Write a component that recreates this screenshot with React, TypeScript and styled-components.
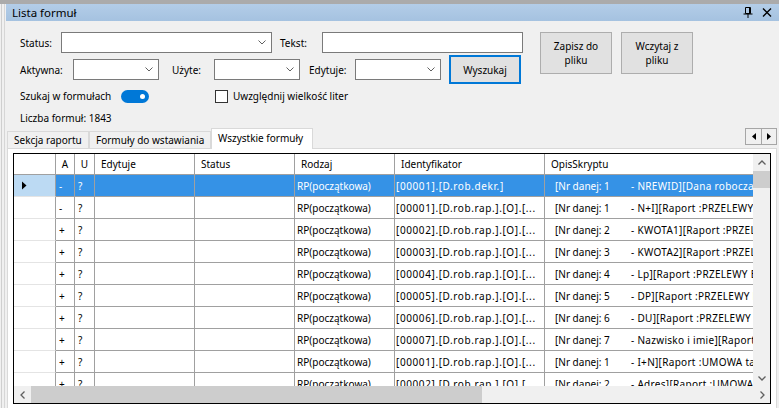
import React from "react"
import styled, { createGlobalStyle } from "styled-components"

const GlobalStyle = createGlobalStyle`
  * { box-sizing: border-box; }
  html, body { margin: 0; padding: 0; background: #f0f0f0; }
  body {
    font-family: "Noto Sans", "Liberation Sans", sans-serif;
    font-size: 10px;
    color: #000;
    overflow: hidden;
  }
`

const Window = styled.div`
  width: 779px;
  height: 408px;
  display: flex;
  overflow: hidden;
  border-top: 4px solid #ababab;
  background: #f0f0f0;
`

const SideStrip = styled.div`
  flex: none;
  width: 6px;
  background: linear-gradient(
    to right,
    #f0f0f0 0 1px,
    #cfcfcf 1px 2px,
    #f0f0f0 2px 4px,
    #d6d6d6 4px 5px,
    #f0f0f0 5px
  );
`

const Panel = styled.div`
  flex: 1;
  min-width: 0;
  display: flex;
  flex-direction: column;
`

const TitleBar = styled.div`
  flex: none;
  height: 17px;
  display: flex;
  align-items: center;
  padding: 0 7px 0 6px;
  background: linear-gradient(#b3cde8, #a5c2e0);
  font-size: 11.5px;
`

const TitleText = styled.span`
  flex: 1;
`

const TitleButtons = styled.div`
  display: flex;
  align-items: center;
  gap: 9px;
`

const Filters = styled.div`
  display: flex;
  align-items: flex-start;
  margin-top: 11px;
  padding-left: 14px;
`

const FilterRows = styled.div`
  display: flex;
  flex-direction: column;
  width: 503px;
`

const FilterRow = styled.div<{ $h: number; $mt?: number }>`
  display: flex;
  align-items: center;
  height: ${p => p.$h}px;
  margin-top: ${p => p.$mt ?? 0}px;
`

const FieldLabel = styled.span<{ $w?: number; $ml?: number }>`
  flex: none;
  width: ${p => (p.$w ? `${p.$w}px` : "auto")};
  margin-left: ${p => p.$ml ?? 0}px;
  white-space: nowrap;
`

const Combo = styled.div<{ $w: number }>`
  flex: none;
  width: ${p => p.$w}px;
  height: 21px;
  display: flex;
  align-items: center;
  justify-content: flex-end;
  padding-right: 5px;
  background: #fff;
  border: 1px solid #7a7a7a;
`

const TextBox = styled.div<{ $w: number }>`
  flex: none;
  width: ${p => p.$w}px;
  height: 21px;
  background: #fff;
  border: 1px solid #7a7a7a;
`

const Button = styled.button<{ $w: number; $h: number; $ml?: number; $focused?: boolean }>`
  flex: none;
  width: ${p => p.$w}px;
  height: ${p => p.$h}px;
  margin-left: ${p => p.$ml ?? 0}px;
  padding: 0;
  font: inherit;
  line-height: 14px;
  color: #000;
  background: #e1e1e1;
  border: ${p => (p.$focused ? "2px solid #0078d7" : "1px solid #adadad")};
`

const ActionButtons = styled.div`
  display: flex;
  gap: 9px;
  margin-left: 17px;
`

const Toggle = styled.div`
  flex: none;
  width: 28px;
  height: 13px;
  border-radius: 7px;
  background: #0078d7;
  display: flex;
  align-items: center;
  justify-content: flex-end;
  padding-right: 4px;
`

const Knob = styled.span`
  width: 5px;
  height: 5px;
  border-radius: 50%;
  background: #fff;
`

const CheckBox = styled.span<{ $ml: number }>`
  flex: none;
  width: 13px;
  height: 13px;
  margin: 0 5px 0 ${p => p.$ml}px;
  background: #fff;
  border: 1px solid #333;
`

const TabStrip = styled.div`
  flex: none;
  display: flex;
  align-items: flex-end;
  height: 20px;
  margin-top: 2px;
  padding: 0 2px 0 1px;
`

const Tab = styled.div<{ $w: number; $active?: boolean }>`
  flex: none;
  position: relative;
  z-index: ${p => (p.$active ? 1 : 0)};
  width: ${p => p.$w}px;
  height: ${p => (p.$active ? 21 : 17)}px;
  margin-bottom: ${p => (p.$active ? -1 : 0)}px;
  padding: ${p => (p.$active ? "0 0 3px 6px" : "0 0 0 6px")};
  display: flex;
  align-items: center;
  white-space: nowrap;
  background: ${p => (p.$active ? "#fff" : "#f0f0f0")};
  border: 1px solid #d9d9d9;
  border-bottom: none;
`

const TabNav = styled.div`
  flex: none;
  align-self: flex-start;
  display: flex;
  margin-left: auto;
  border: 1px solid #a6a6a6;
`

const TabNavButton = styled.div`
  width: 15px;
  height: 15px;
  display: flex;
  align-items: center;
  justify-content: center;
  background: #f0f0f0;
  & + & {
    border-left: 1px solid #a6a6a6;
  }
`

const TabPage = styled.div`
  flex: 1;
  margin: 0 2px 0 1px;
  padding: 4px 0 0 5px;
  background: #fff;
  border: 1px solid #d9d9d9;
  border-bottom: none;
`

const Grid = styled.div`
  width: 758px;
  height: 251px;
  display: flex;
  flex-direction: column;
  background: #fff;
  border: 1px solid #000;
`

const GridMain = styled.div`
  flex: none;
  display: flex;
  height: 232px;
`

const DataArea = styled.div`
  width: 739px;
  overflow: hidden;
`

const GridRow = styled.div<{ $h: number }>`
  display: flex;
  height: ${p => p.$h}px;
`

const RowHead = styled.div<{ $sel?: boolean; $head?: boolean }>`
  flex: none;
  width: 42px;
  display: flex;
  align-items: center;
  padding-left: 8px;
  background: ${p => (p.$sel ? "#bcdaf3" : "#fff")};
  border-right: 1px solid #a0a0a0;
  border-bottom: 1px solid ${p => (p.$head ? "#a0a0a0" : "#e4e4e4")};
`

const Cell = styled.div<{ $w: number; $pl?: number; $center?: boolean; $sel?: boolean; $ls?: number }>`
  flex: none;
  width: ${p => p.$w}px;
  padding-left: ${p => p.$pl ?? 2}px;
  display: flex;
  align-items: center;
  justify-content: ${p => (p.$center ? "center" : "flex-start")};
  overflow: hidden;
  white-space: nowrap;
  letter-spacing: ${p => p.$ls ?? 0}px;
  color: ${p => (p.$sel ? "#fff" : "#000")};
  background: ${p => (p.$sel ? "#3592e6" : "#fff")};
  border-right: 1px solid #a0a0a0;
  border-bottom: 1px solid #a0a0a0;
`

const OpisNr = styled.span`
  flex: none;
  width: 76px;
`

const OpisText = styled.span`
  flex: none;
  letter-spacing: 0.3px;
`

const VScroll = styled.div`
  width: 17px;
  display: flex;
  flex-direction: column;
  background: #f0f0f0;
`

const HScroll = styled.div`
  flex: none;
  height: 17px;
  display: flex;
  background: #f0f0f0;
`

const ArrowBox = styled.div`
  flex: none;
  width: 17px;
  height: 17px;
  display: flex;
  align-items: center;
  justify-content: center;
`

const Thumb = styled.div<{ $w: number; $h: number }>`
  flex: none;
  width: ${p => p.$w}px;
  height: ${p => p.$h}px;
  background: #cdcdcd;
`

const Fill = styled.div`
  flex: 1;
`

const ComboChevron = () => (
  <svg width="8" height="5" viewBox="0 0 8 5">
    <path d="M0.5 0.5 L4 4 L7.5 0.5" fill="none" stroke="#606060" strokeWidth="1" />
  </svg>
)

const ScrollChevron = ({ dir }: { dir: "up" | "down" | "left" | "right" }) => {
  const rot = { up: 180, down: 0, left: 90, right: 270 }[dir]
  return (
    <svg width="8" height="8" viewBox="0 0 8 8" style={{ transform: `rotate(${rot}deg)` }}>
      <path d="M0.5 2.5 L4 6 L7.5 2.5" fill="none" stroke="#606060" strokeWidth="1.3" />
    </svg>
  )
}

const NavTriangle = ({ left }: { left?: boolean }) => (
  <svg width="4" height="7" viewBox="0 0 4 7">
    <path d={left ? "M4 0 L0 3.5 L4 7Z" : "M0 0 L4 3.5 L0 7Z"} fill="#000" />
  </svg>
)

const PinIcon = () => (
  <svg width="10" height="11" viewBox="0 0 10 11">
    <path d="M2.5 0.5 H7.5 V6.5 H2.5 Z" fill="none" stroke="#000" strokeWidth="1" />
    <path d="M6.5 1 V6.5" stroke="#000" strokeWidth="1" />
    <path d="M0.5 7 H9.5" stroke="#000" strokeWidth="1" />
    <path d="M5 7 V11" stroke="#000" strokeWidth="1" />
  </svg>
)

const CloseIcon = () => (
  <svg width="10" height="9" viewBox="0 0 10 9">
    <path d="M1 0.5 L9 8.5 M9 0.5 L1 8.5" stroke="#000" strokeWidth="1.4" />
  </svg>
)

const RowMarker = () => (
  <svg width="5" height="9" viewBox="0 0 5 9">
    <path d="M0 0.5 L4.5 4.5 L0 8.5Z" fill="#000" />
  </svg>
)

type FormulaRow = { a: string; id: string; nr: number; opis: string }

const rows: FormulaRow[] = [
  { a: "-", id: "[00001].[D.rob.dekr.]", nr: 1, opis: "- NREWID][Dana robocza dekretu]" },
  { a: "-", id: "[00001].[D.rob.rap.].[O].[...", nr: 1, opis: "- N+I][Raport :PRZELEWY BANKOWE]" },
  { a: "+", id: "[00002].[D.rob.rap.].[O].[...", nr: 2, opis: "- KWOTA1][Raport :PRZELEWY BANKOWE]" },
  { a: "+", id: "[00003].[D.rob.rap.].[O].[...", nr: 3, opis: "- KWOTA2][Raport :PRZELEWY BANKOWE]" },
  { a: "+", id: "[00004].[D.rob.rap.].[O].[...", nr: 4, opis: "- Lp][Raport :PRZELEWY BANKOWE]" },
  { a: "+", id: "[00005].[D.rob.rap.].[O].[...", nr: 5, opis: "- DP][Raport :PRZELEWY BANKOWE]" },
  { a: "+", id: "[00006].[D.rob.rap.].[O].[...", nr: 6, opis: "- DU][Raport :PRZELEWY BANKOWE]" },
  { a: "+", id: "[00007].[D.rob.rap.].[O].[...", nr: 7, opis: "- Nazwisko i imie][Raport :PRZELEWY BANKOWE]" },
  { a: "+", id: "[00001].[D.rob.rap.].[O].[...", nr: 1, opis: "- I+N][Raport :UMOWA tabela]" },
  { a: "+", id: "[00002].[D.rob.rap.].[O].[...", nr: 2, opis: "- Adres][Raport :UMOWA tabela]" },
]

const columns = [
  { title: "A", w: 19, center: true },
  { title: "U", w: 20, center: true },
  { title: "Edytuje", w: 100 },
  { title: "Status", w: 100 },
  { title: "Rodzaj", w: 100 },
  { title: "Identyfikator", w: 150 },
  { title: "OpisSkryptu", w: 300 },
]

const App = () => {
  return (
    <>
      <GlobalStyle />
      <Window>
        <SideStrip />
        <Panel>
          <TitleBar>
            <TitleText>Lista formuł</TitleText>
            <TitleButtons>
              <PinIcon />
              <CloseIcon />
            </TitleButtons>
          </TitleBar>

          <Filters>
            <FilterRows>
              <FilterRow $h={21}>
                <FieldLabel $w={41}>Status:</FieldLabel>
                <Combo $w={211}>
                  <ComboChevron />
                </Combo>
                <FieldLabel $w={42} $ml={8}>
                  Tekst:
                </FieldLabel>
                <TextBox $w={201} />
              </FilterRow>
              <FilterRow $h={29} $mt={2}>
                <FieldLabel $w={53}>Aktywna:</FieldLabel>
                <Combo $w={86}>
                  <ComboChevron />
                </Combo>
                <FieldLabel $w={42} $ml={13}>
                  Użyte:
                </FieldLabel>
                <Combo $w={86}>
                  <ComboChevron />
                </Combo>
                <FieldLabel $w={46} $ml={9}>
                  Edytuje:
                </FieldLabel>
                <Combo $w={86}>
                  <ComboChevron />
                </Combo>
                <Button $w={72} $h={29} $ml={8} $focused>
                  Wyszukaj
                </Button>
              </FilterRow>
              <FilterRow $h={18} $mt={3}>
                <FieldLabel $w={101}>Szukaj w formułach</FieldLabel>
                <Toggle>
                  <Knob />
                </Toggle>
                <CheckBox $ml={66} />
                <FieldLabel>Uwzględnij wielkość liter</FieldLabel>
              </FilterRow>
              <FilterRow $h={16} $mt={5}>
                <FieldLabel>Liczba formuł: 1843</FieldLabel>
              </FilterRow>
            </FilterRows>
            <ActionButtons>
              <Button $w={72} $h={42}>
                Zapisz do
                <br />
                pliku
              </Button>
              <Button $w={72} $h={42}>
                Wczytaj z
                <br />
                pliku
              </Button>
            </ActionButtons>
          </Filters>

          <TabStrip>
            <Tab $w={82}>Sekcja raportu</Tab>
            <Tab $w={122}>Formuły do wstawiania</Tab>
            <Tab $w={102} $active>
              Wszystkie formuły
            </Tab>
            <TabNav>
              <TabNavButton>
                <NavTriangle left />
              </TabNavButton>
              <TabNavButton>
                <NavTriangle />
              </TabNavButton>
            </TabNav>
          </TabStrip>

          <TabPage>
            <Grid>
              <GridMain>
                <DataArea>
                  <GridRow $h={21}>
                    <RowHead $head />
                    {columns.map(c => (
                      <Cell key={c.title} $w={c.w} $center={c.center} $pl={c.center ? 0 : 6}>
                        {c.title}
                      </Cell>
                    ))}
                  </GridRow>
                  {rows.map((r, i) => {
                    const sel = i === 0
                    return (
                      <GridRow $h={22} key={i}>
                        <RowHead $sel={sel}>{sel && <RowMarker />}</RowHead>
                        <Cell $w={19} $sel={sel} $pl={3}>
                          {r.a}
                        </Cell>
                        <Cell $w={20} $sel={sel} $pl={3}>
                          ?
                        </Cell>
                        <Cell $w={100} $sel={sel} />
                        <Cell $w={100} $sel={sel} />
                        <Cell $w={100} $sel={sel}>
                          RP(początkowa)
                        </Cell>
                        <Cell $w={150} $sel={sel} $pl={1} $ls={0.6}>
                          {r.id}
                        </Cell>
                        <Cell $w={300} $sel={sel} $pl={10}>
                          <OpisNr>[Nr danej: {r.nr}</OpisNr>
                          <OpisText>{r.opis}</OpisText>
                        </Cell>
                      </GridRow>
                    )
                  })}
                </DataArea>
                <VScroll>
                  <ArrowBox>
                    <ScrollChevron dir="up" />
                  </ArrowBox>
                  <Thumb $w={17} $h={17} />
                  <Fill />
                  <ArrowBox>
                    <ScrollChevron dir="down" />
                  </ArrowBox>
                </VScroll>
              </GridMain>
              <HScroll>
                <ArrowBox>
                  <ScrollChevron dir="left" />
                </ArrowBox>
                <Thumb $w={451} $h={17} />
                <Fill />
                <ArrowBox>
                  <ScrollChevron dir="right" />
                </ArrowBox>
              </HScroll>
            </Grid>
          </TabPage>
        </Panel>
      </Window>
    </>
  )
}

export default App
